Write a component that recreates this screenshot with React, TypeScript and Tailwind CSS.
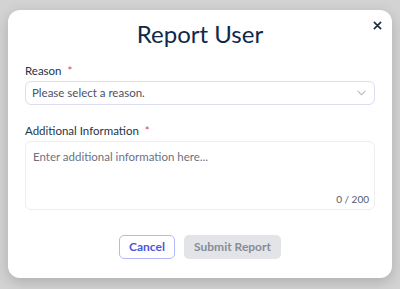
import React from "react";

export default function App() {
  return (
    <div className="w-[400px] h-[289px] overflow-hidden bg-[#d3d3d3] pt-[10px] px-[8px] font-['Lato',_'Open_Sans',_sans-serif]">
      <div className="relative h-[268px] bg-white rounded-[12px] shadow-[0_4px_14px_rgba(0,0,0,0.18)] px-[17px] pt-[9px]">
        <button className="absolute top-[8px] right-[8px] w-[14px] h-[14px] flex items-center justify-center text-[#1b2b45]">
          <svg width="9" height="9" viewBox="0 0 10 10" fill="none" stroke="currentColor" strokeWidth="1.8" strokeLinecap="round">
            <path d="M1.5 1.5l7 7M8.5 1.5l-7 7" />
          </svg>
        </button>
        <h1 className="text-center text-[24px] leading-[30px] text-[#10284a] font-normal">Report User</h1>

        <label className="block mt-[13px] text-[11.5px] leading-[18px] text-[#243349]">
          Reason <span className="text-[#e0474c] ml-[3px]">*</span>
        </label>
        <div className="mt-[1px] h-[24px] border border-[#dcdcf3] rounded-[6px] flex items-center justify-between pl-[6px] pr-[8px]">
          <span className="text-[11.5px] text-[#4a5264]">Please select a reason.</span>
          <svg width="9" height="6" viewBox="0 0 10 6" fill="none" stroke="#b5b9c4" strokeWidth="1.2" strokeLinecap="round" strokeLinejoin="round">
            <path d="M1 1l4 4 4-4" />
          </svg>
        </div>

        <label className="block mt-[17px] text-[11.5px] leading-[18px] text-[#243349]">
          Additional Information <span className="text-[#e0474c] ml-[3px]">*</span>
        </label>
        <div className="mt-[1px] h-[69px] border border-[#eeeef2] rounded-[6px] flex flex-col justify-between pl-[7px] pr-[5px] pt-[7px] pb-[3px]">
          <span className="text-[11.5px] leading-[16px] text-[#6b7280]">Enter additional information here...</span>
          <span className="self-end text-[10px] leading-[13px] text-[#555c6a]">0 / 200</span>
        </div>

        <div className="mt-[25px] flex justify-center gap-[9px]">
          <button className="h-[24px] w-[56px] border border-[#b3b7fb] rounded-[5px] text-[12px] font-bold text-[#4d56d8]">
            Cancel
          </button>
          <button className="h-[24px] w-[97px] bg-[#e2e4e8] rounded-[5px] text-[12px] font-bold text-[#878c97]">
            Submit Report
          </button>
        </div>
      </div>
    </div>
  );
}
